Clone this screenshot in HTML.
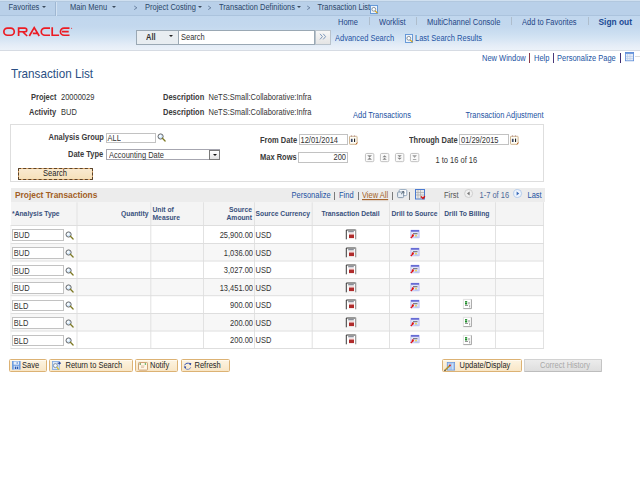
<!DOCTYPE html>
<html><head><meta charset="utf-8"><style>
*{box-sizing:border-box}
html,body{margin:0;padding:0;width:640px;height:480px;overflow:hidden;background:#fff;font-family:"Liberation Sans",sans-serif;font-size:7.5px;color:#333}
.a{position:absolute;white-space:nowrap;line-height:1}
svg.a{overflow:visible}
.lnk{color:#2353a3}
.lbl{font-weight:bold;color:#3a3a3a}
.navt{color:#2b4668}
.gh{font-weight:bold;color:#38507c;font-size:6.75px}
.t{transform:scaleY(1.1);transform-origin:0 85%}
</style></head><body>
<div class="a" style="left:0px;top:0px;width:640px;height:16px;background:#b9d0e9;border-top:1px solid #d0e0f0;border-bottom:1px solid #abc3dd"></div>
<div class="a" style="left:0px;top:1px;width:640px;height:1px;background:#b2c8df"></div>
<div class="a" style="left:0px;top:16px;width:640px;height:34px;background:linear-gradient(#c1d7ee 0%,#c3d8ee 30%,#cbdef1 50%,#d6e5f4 68%,#e3ecf7 84%,#ecf2f9 100%)"></div>
<div class="a" style="left:0px;top:50px;width:640px;height:1px;background:#d6dbe3"></div>
<div class="a t navt" style="left:8.5px;top:3.5px;">Favorites</div>
<div class="a" style="left:41.6px;top:5.9px;width:0;height:0;border-left:2.9px solid transparent;border-right:2.9px solid transparent;border-top:2.8px solid #3b4a5c"></div>
<div class="a" style="left:55px;top:2px;width:1px;height:13.5px;background:#9fb7d2"></div>
<div class="a" style="left:56px;top:2px;width:1px;height:13.5px;background:#d3e2f2"></div>
<div class="a t navt" style="left:70px;top:3.5px;">Main Menu</div>
<div class="a" style="left:111.6px;top:5.9px;width:0;height:0;border-left:2.9px solid transparent;border-right:2.9px solid transparent;border-top:2.8px solid #3b4a5c"></div>
<svg class="a" style="left:133.0px;top:0px" width="6" height="16" viewBox="0 0 6 16"><path d="M1.2 6L3.9 7.8L1.2 9.6" stroke="#5f7696" stroke-width="0.85" fill="none"/></svg>
<div class="a t navt" style="left:145px;top:3.5px;">Project Costing</div>
<div class="a" style="left:197.6px;top:5.9px;width:0;height:0;border-left:2.9px solid transparent;border-right:2.9px solid transparent;border-top:2.8px solid #3b4a5c"></div>
<svg class="a" style="left:206.5px;top:0px" width="6" height="16" viewBox="0 0 6 16"><path d="M1.2 6L3.9 7.8L1.2 9.6" stroke="#5f7696" stroke-width="0.85" fill="none"/></svg>
<div class="a t navt" style="left:219px;top:3.5px;">Transaction Definitions</div>
<div class="a" style="left:297.2px;top:5.9px;width:0;height:0;border-left:2.9px solid transparent;border-right:2.9px solid transparent;border-top:2.8px solid #3b4a5c"></div>
<svg class="a" style="left:305.5px;top:0px" width="6" height="16" viewBox="0 0 6 16"><path d="M1.2 6L3.9 7.8L1.2 9.6" stroke="#5f7696" stroke-width="0.85" fill="none"/></svg>
<div class="a t navt" style="left:317.5px;top:3.5px;">Transaction List</div>
<svg class="a" style="left:370px;top:5px" width="9" height="9" viewBox="0 0 9 9"><rect x="0.5" y="0.5" width="7" height="8" fill="#eef4fb" stroke="#5c92d6" stroke-width="0.9"/>
<circle cx="3.8" cy="4.3" r="1.9" fill="#fff" stroke="#6a7a8a" stroke-width="0.8"/>
<path d="M5.2 5.8L7.4 8.2" stroke="#d4a010" stroke-width="1.2"/></svg>
<svg class="a" style="left:0px;top:0px" width="80" height="50" viewBox="0 0 80 50"><g fill="none" stroke="#ec1c24" stroke-width="1.7">
<rect x="3.85" y="28.05" width="10.4" height="7.2" rx="3.6"/>
<path d="M18.6 36V28.05H24.9A1.85 1.85 0 0 1 24.9 31.75H19.2M22.6 31.75L27.2 36"/>
<path d="M29.3 36L34.2 27.6L39.2 36M32.8 33.3H37.3"/>
<path d="M50 28.05H44.85A3.6 3.6 0 0 0 44.85 35.25H50"/>
<path d="M52.2 27.3V35.25H59.1"/>
<path d="M69.5 28.05H64.05A3.6 3.6 0 0 0 64.05 35.25H69.5M62 31.7H68.7"/>
</g><circle cx="71.6" cy="28.25" r="0.55" fill="#ec1c24"/></svg>
<div class="a" style="left:136px;top:30.2px;width:42px;height:14.4px;background:#e8edf1;border:1px solid #9aa8b4;border-right:none"></div>
<div class="a t " style="left:146px;top:34px;font-weight:bold;color:#333">All</div>
<div class="a" style="left:169.2px;top:35.3px;width:0;height:0;border-left:2.4px solid transparent;border-right:2.4px solid transparent;border-top:2.6px solid #222"></div>
<div class="a" style="left:177.5px;top:30.2px;width:137px;height:14.4px;background:#fff;border:1px solid #9aa8b4"></div>
<div class="a t " style="left:181px;top:34px;">Search</div>
<div class="a" style="left:315px;top:29.5px;width:16px;height:15px;background:linear-gradient(#f7f7f7,#e4e4e4);border:1px solid #b9c3cc"></div>
<svg class="a" style="left:319px;top:33px" width="9" height="8" viewBox="0 0 9 8"><path d="M1 0.8L3.4 3.6L1 6.4M4.2 0.8L6.6 3.6L4.2 6.4" stroke="#6f8db5" stroke-width="0.9" fill="none"/></svg>
<div class="a t lnk" style="left:335px;top:35.1px;">Advanced Search</div>
<svg class="a" style="left:404.5px;top:33.8px" width="9" height="9" viewBox="0 0 9 9"><rect x="0.5" y="0.5" width="7" height="8" fill="#eef4fb" stroke="#5c92d6" stroke-width="0.9"/>
<circle cx="3.8" cy="4.3" r="1.9" fill="#fff" stroke="#6a7a8a" stroke-width="0.8"/>
<path d="M5.2 5.8L7.4 8.2" stroke="#d4a010" stroke-width="1.2"/></svg>
<div class="a t lnk" style="left:415px;top:35.1px;">Last Search Results</div>
<div class="a t lnk" style="left:338px;top:18.7px;color:#1f4585">Home</div>
<div class="a" style="left:369px;top:17.3px;width:1.2px;height:7.8px;background:#aebdcc"></div>
<div class="a t lnk" style="left:379px;top:18.7px;color:#1f4585">Worklist</div>
<div class="a" style="left:416px;top:17.3px;width:1.2px;height:7.8px;background:#aebdcc"></div>
<div class="a t lnk" style="left:427px;top:18.7px;color:#1f4585">MultiChannel Console</div>
<div class="a" style="left:511px;top:17.3px;width:1.2px;height:7.8px;background:#aebdcc"></div>
<div class="a t lnk" style="left:522px;top:18.7px;color:#1f4585">Add to Favorites</div>
<div class="a" style="left:588px;top:17.3px;width:1.2px;height:7.8px;background:#aebdcc"></div>
<div class="a t " style="left:598.5px;top:17.8px;font-size:8.4px;font-weight:bold;color:#1c4a94">Sign out</div>
<div class="a t lnk" style="left:482px;top:54.8px;">New Window</div>
<div class="a" style="left:529px;top:53.2px;width:1px;height:9.5px;background:#8a3a4a"></div>
<div class="a t lnk" style="left:534px;top:54.8px;">Help</div>
<div class="a" style="left:553px;top:53.2px;width:1px;height:9.5px;background:#4a3a7a"></div>
<div class="a t lnk" style="left:557px;top:54.8px;">Personalize Page</div>
<div class="a" style="left:620px;top:53px;width:1px;height:9.8px;background:#3e2e72"></div>
<svg class="a" style="left:625px;top:52.2px" width="10" height="10" viewBox="0 0 10 10"><rect x="0.4" y="0.4" width="8.2" height="8.4" fill="#e4ecf8" stroke="#5b8ad8" stroke-width="0.8"/>
<rect x="0.4" y="0.4" width="8.2" height="1.4" fill="#5b8ad8"/><path d="M2.5 2v6.4M5 2v6.4M1 4.5h7M1 6.5h7" stroke="#b8cbe8" stroke-width="0.6"/></svg>
<div class="a" style="left:635px;top:56px;width:5px;height:0.8px;background:#dcdcdc"></div>
<div class="a t " style="left:11px;top:68px;font-size:11.7px;color:#2a4f84">Transaction List</div>
<div class="a t lbl" style="left:31px;top:93.8px;">Project</div>
<div class="a t " style="left:61px;top:93.8px;">20000029</div>
<div class="a t lbl" style="left:29px;top:108.8px;">Activity</div>
<div class="a t " style="left:61px;top:108.8px;">BUD</div>
<div class="a t lbl" style="left:163px;top:93.8px;">Description</div>
<div class="a t " style="left:208.5px;top:93.8px;">NeTS:Small:Collaborative:Infra</div>
<div class="a t lbl" style="left:163px;top:108.8px;">Description</div>
<div class="a t " style="left:208.5px;top:108.8px;">NeTS:Small:Collaborative:Infra</div>
<div class="a t lnk" style="left:353px;top:112.2px;">Add Transactions</div>
<div class="a t lnk" style="left:465.5px;top:112.2px;">Transaction Adjustment</div>
<div class="a" style="left:10px;top:123.7px;width:534px;height:58.3px;border:1px solid #dedede"></div>
<div class="a t lbl" style="left:48.5px;top:134.2px;">Analysis Group</div>
<div class="a" style="left:105.5px;top:132.5px;width:50px;height:10.2px;background:#fff;border:1px solid #c2c2c2;padding:0 1.0px;line-height:9.6px;text-align:left;color:#333"><span class="t" style="display:inline-block">ALL</span></div>
<svg class="a" style="left:157px;top:133px" width="10" height="10" viewBox="0 0 10 10"><circle cx="3.6" cy="3.5" r="2.6" fill="#d4e8fa" stroke="#6a6a6a" stroke-width="1"/>
<circle cx="3.1" cy="3" r="1.1" fill="#fff"/>
<path d="M5.4 5.3L8.1 8" stroke="#7e7a24" stroke-width="1.3" stroke-linecap="round"/></svg>
<div class="a t lbl" style="left:68px;top:150.8px;">Date Type</div>
<div class="a" style="left:106px;top:149.3px;width:114px;height:11.2px;background:#fff;border:1px solid #a6a6b0;border-right:none;padding:0 2px;line-height:11.6px;color:#333"><span class="t" style="display:inline-block">Accounting Date</span></div>
<div class="a" style="left:209px;top:149.8px;width:11px;height:10px;background:linear-gradient(#ffffff,#e2e2e2);border:1px solid #7a7a7a"></div>
<div class="a" style="left:212.7px;top:153.5px;width:0;height:0;border-left:2.2px solid transparent;border-right:2.2px solid transparent;border-top:2.6px solid #111"></div>
<div class="a" style="left:17.5px;top:167.5px;width:75px;height:12.3px;background:linear-gradient(#f9ead0,#f5e1bb);border:1px solid #d9a46a;border-radius:1px"></div>
<div class="a" style="left:17.5px;top:167.5px;width:75px;height:12.3px;border:1px dashed rgba(40,25,10,0.7)"></div>
<div class="a t " style="left:17.5px;top:170px;width:75px;text-align:center;color:#222">Search</div>
<div class="a t lbl" style="left:260px;top:136.7px;">From Date</div>
<div class="a" style="left:298.5px;top:134.3px;width:49.5px;height:11.2px;background:#fff;border:1px solid #c2c2c2;padding:0 1.0px;line-height:11px;text-align:left;color:#333"><span class="t" style="display:inline-block">12/01/2014</span></div>
<svg class="a" style="left:348.8px;top:135.2px" width="9" height="10" viewBox="0 0 9 10"><rect x="0.5" y="1.3" width="7.6" height="8" rx="0.6" fill="#fffdf4" stroke="#c9ad86" stroke-width="0.9"/>
<rect x="1.9" y="3.8" width="1.7" height="3.2" fill="#3c4a6a"/><rect x="5" y="3.6" width="1.1" height="3.4" fill="#222"/>
<path d="M6.8 9.3L8.3 7.6" stroke="#c66a2a" stroke-width="1"/>
<rect x="2" y="0.3" width="0.9" height="1.6" fill="#b99"/><rect x="5" y="0.3" width="0.9" height="1.6" fill="#b99"/></svg>
<div class="a t lbl" style="left:260px;top:153.5px;">Max Rows</div>
<div class="a" style="left:298px;top:152px;width:50px;height:10.5px;background:#fff;border:1px solid #c2c2c2;padding:0 1.0px;line-height:10.6px;text-align:right;color:#333"><span class="t" style="display:inline-block">200</span></div>
<svg class="a" style="left:365.3px;top:152.9px" width="9" height="9" viewBox="0 0 9 9"><rect x="0.45" y="0.45" width="8.4" height="8.2" rx="1.2" fill="#fafafa" stroke="#b4b4b4" stroke-width="0.8"/><path d="M2.6 2.5h4M2.6 6.5h4" stroke="#858585" stroke-width="0.7"/><path d="M3 3.1h3.2L4.6 4.4zM3 5.9h3.2L4.6 4.6z" fill="#858585"/></svg>
<svg class="a" style="left:380.3px;top:152.9px" width="9" height="9" viewBox="0 0 9 9"><rect x="0.45" y="0.45" width="8.4" height="8.2" rx="1.2" fill="#fafafa" stroke="#b4b4b4" stroke-width="0.8"/><path d="M2.4 4.2h4.4L4.6 2.2zM2.4 6.8h4.4L4.6 4.7z" fill="#858585"/></svg>
<svg class="a" style="left:395.3px;top:152.9px" width="9" height="9" viewBox="0 0 9 9"><rect x="0.45" y="0.45" width="8.4" height="8.2" rx="1.2" fill="#fafafa" stroke="#b4b4b4" stroke-width="0.8"/><path d="M2.4 2.2h4.4L4.6 4.3zM2.4 4.7h4.4L4.6 6.8z" fill="#858585"/></svg>
<svg class="a" style="left:410.3px;top:152.9px" width="9" height="9" viewBox="0 0 9 9"><rect x="0.45" y="0.45" width="8.4" height="8.2" rx="1.2" fill="#fafafa" stroke="#b4b4b4" stroke-width="0.8"/><path d="M2.6 2.6h4M2.9 6.5h3.4" stroke="#858585" stroke-width="0.7"/><path d="M3 3.2h3.2L4.6 4.7z" fill="#858585"/></svg>
<div class="a t lbl" style="left:409px;top:136.7px;">Through Date</div>
<div class="a" style="left:459px;top:134.3px;width:50px;height:11.2px;background:#fff;border:1px solid #c2c2c2;padding:0 1.0px;line-height:11px;text-align:left;color:#333"><span class="t" style="display:inline-block">01/29/2015</span></div>
<svg class="a" style="left:510px;top:135.2px" width="9" height="10" viewBox="0 0 9 10"><rect x="0.5" y="1.3" width="7.6" height="8" rx="0.6" fill="#fffdf4" stroke="#c9ad86" stroke-width="0.9"/>
<rect x="1.9" y="3.8" width="1.7" height="3.2" fill="#3c4a6a"/><rect x="5" y="3.6" width="1.1" height="3.4" fill="#222"/>
<path d="M6.8 9.3L8.3 7.6" stroke="#c66a2a" stroke-width="1"/>
<rect x="2" y="0.3" width="0.9" height="1.6" fill="#b99"/><rect x="5" y="0.3" width="0.9" height="1.6" fill="#b99"/></svg>
<div class="a t " style="left:435.5px;top:156.7px;">1 to 16 of 16</div>
<div class="a" style="left:10.5px;top:187.6px;width:534.5px;height:14.8px;background:#ececec"></div>
<div class="a t " style="left:15px;top:190.8px;font-size:8.4px;font-weight:bold;color:#a25e25">Project Transactions</div>
<div class="a t lnk" style="left:291.5px;top:192px;">Personalize</div>
<div class="a" style="left:334px;top:192.3px;width:0.8px;height:7.3px;background:#7a7a7a"></div>
<div class="a t lnk" style="left:339px;top:192px;">Find</div>
<div class="a" style="left:357.7px;top:192.3px;width:0.8px;height:7.3px;background:#7a7a7a"></div>
<div class="a t " style="left:362px;top:192px;color:#a25e25"><u>View All</u></div>
<div class="a" style="left:392.3px;top:192.3px;width:0.8px;height:7.3px;background:#7a7a7a"></div>
<svg class="a" style="left:396.5px;top:188.5px" width="11" height="10" viewBox="0 0 11 10"><rect x="2.2" y="0.6" width="7.6" height="6" rx="1" fill="#fff" stroke="#8aa0b8" stroke-width="0.9"/>
<rect x="0.6" y="3" width="6" height="5.6" rx="1" fill="#e8eef4" stroke="#7c8ea4" stroke-width="0.9"/>
<path d="M4 5.2L6.8 2.6M5.2 2.6h1.8v1.8" stroke="#4a5a6a" stroke-width="0.8" fill="none"/></svg>
<div class="a" style="left:409.2px;top:192.3px;width:0.8px;height:7.3px;background:#7a7a7a"></div>
<svg class="a" style="left:415px;top:188.6px" width="10" height="10.5" viewBox="0 0 10 10.5"><rect x="0.5" y="0.5" width="9" height="9.5" fill="#e8e8e8" stroke="#4a7ad0" stroke-width="1"/>
<path d="M3 1v9M5.5 1v9M1 3.5h8M1 6h8" stroke="#aaa" stroke-width="0.7"/>
<path d="M6 7.5L8 9.5L9.8 7.2" stroke="#d01010" stroke-width="1.4" fill="none"/></svg>
<div class="a t " style="left:444px;top:192px;color:#555">First</div>
<svg class="a" style="left:464.3px;top:188.5px" width="10" height="10" viewBox="0 0 10 10"><circle cx="4.6" cy="4.5" r="4" fill="#f0f0f0" stroke="#c8c8c8" stroke-width="0.8"/><path d="M5.6 2.6v3.8L3 4.5z" fill="#777"/></svg>
<div class="a t " style="left:479.5px;top:192px;color:#4c6a99">1-7 of 16</div>
<svg class="a" style="left:513px;top:188.5px" width="10" height="10" viewBox="0 0 10 10"><circle cx="4.6" cy="4.5" r="4" fill="#eef4fc" stroke="#a8c4e8" stroke-width="0.8"/><path d="M3.6 2.6v3.8L6.2 4.5z" fill="#3a6ab8"/></svg>
<div class="a t lnk" style="left:527.5px;top:192px;">Last</div>
<div class="a" style="left:10.5px;top:202.3px;width:533.5px;height:23.2px;background:#f4f4f4"></div>
<svg class="a" style="left:0;top:0" width="640" height="480" viewBox="0 0 640 480"><rect x="10.5" y="244.0" width="533.5" height="16.5" fill="#f7f7f7"/><rect x="10.5" y="279.0" width="533.5" height="16.19999999999999" fill="#f7f7f7"/><rect x="10.5" y="314.0" width="533.5" height="16.5" fill="#f7f7f7"/><rect x="76.5" y="202.3" width="1" height="146.2" fill="#e2e2e2"/><rect x="150.3" y="202.3" width="1" height="146.2" fill="#e2e2e2"/><rect x="203.0" y="202.3" width="1" height="146.2" fill="#e2e2e2"/><rect x="254.0" y="202.3" width="1" height="146.2" fill="#e2e2e2"/><rect x="311.7" y="202.3" width="1" height="146.2" fill="#e2e2e2"/><rect x="389.0" y="202.3" width="1" height="146.2" fill="#e2e2e2"/><rect x="439.0" y="202.3" width="1" height="146.2" fill="#e2e2e2"/><rect x="495.0" y="202.3" width="1" height="146.2" fill="#e2e2e2"/><rect x="543.0" y="202.3" width="1" height="146.2" fill="#e2e2e2"/><rect x="10.5" y="225.0" width="533.5" height="1" fill="#dedede"/><rect x="10.5" y="243.0" width="533.5" height="1" fill="#dedede"/><rect x="10.5" y="260.5" width="533.5" height="1" fill="#dedede"/><rect x="10.5" y="278.0" width="533.5" height="1" fill="#dedede"/><rect x="10.5" y="295.2" width="533.5" height="1" fill="#dedede"/><rect x="10.5" y="313.0" width="533.5" height="1" fill="#dedede"/><rect x="10.5" y="330.5" width="533.5" height="1" fill="#dedede"/><rect x="10.5" y="348.0" width="533.5" height="1" fill="#dedede"/><rect x="10.6" y="225.5" width="0.7" height="122.5" fill="#ececec"/></svg>
<div class="a t gh" style="left:12px;top:210.8px;">*Analysis Type</div>
<div class="a t gh" style="left:120px;top:210.8px;width:28.5px;text-align:right;">Quantity</div>
<div class="a t gh" style="left:152.5px;top:206.5px;line-height:7.1px">Unit of<br>Measure</div>
<div class="a t gh" style="left:212px;top:206.5px;line-height:7.1px;width:40px;text-align:right">Source<br>Amount</div>
<div class="a t gh" style="left:255.5px;top:210.8px;">Source Currency</div>
<div class="a t gh" style="left:312px;top:210.8px;width:77px;text-align:center">Transaction Detail</div>
<div class="a t gh" style="left:389.5px;top:210.8px;width:50px;text-align:center">Drill to Source</div>
<div class="a t gh" style="left:444.2px;top:210.8px;">Drill To Billing</div>
<div class="a" style="left:12.2px;top:229.3px;width:52.2px;height:11.4px;background:#fff;border:1px solid #c2c2c2;padding:0 0.6px;line-height:11px;text-align:left;color:#333"><span class="t" style="display:inline-block">BUD</span></div>
<svg class="a" style="left:65px;top:231.0px" width="10" height="10" viewBox="0 0 10 10"><circle cx="3.6" cy="3.5" r="2.6" fill="#d4e8fa" stroke="#6a6a6a" stroke-width="1"/>
<circle cx="3.1" cy="3" r="1.1" fill="#fff"/>
<path d="M5.4 5.3L8.1 8" stroke="#7e7a24" stroke-width="1.3" stroke-linecap="round"/></svg>
<div class="a t " style="left:173px;top:231.7px;width:80px;text-align:right">25,900.00</div>
<div class="a t " style="left:255.5px;top:231.7px;">USD</div>
<svg class="a" style="left:342px;top:225.5px" width="20" height="16" viewBox="0 0 20 16"><path d="M4.3 13.3V4H13.6" stroke="#222" stroke-width="0.9" fill="none"/>
<rect x="13" y="3.6" width="1.3" height="9.7" fill="#9c9c9c"/>
<rect x="6.2" y="5.4" width="5.6" height="0.8" fill="#444a5a"/>
<rect x="7" y="7.6" width="5" height="1.2" fill="#e6b4b4"/><rect x="7" y="8.7" width="5" height="3.4" fill="#b02c2c"/></svg>
<svg class="a" style="left:406px;top:225.5px" width="20" height="16" viewBox="0 0 20 16"><rect x="4.3" y="3.7" width="9.4" height="8.6" rx="0.8" fill="#c4c6f2"/>
<rect x="5" y="4.3" width="8" height="1.2" fill="#4046c8"/>
<rect x="5.4" y="6.1" width="7" height="5.2" fill="#e4e6fa"/>
<rect x="7" y="7.3" width="4.5" height="0.9" fill="#555"/>
<circle cx="10" cy="9.8" r="0.9" fill="#f0d020"/>
<rect x="8.6" y="10.5" width="3.6" height="1" fill="#a8c0f0"/>
<path d="M4.8 12L7.2 9.6" stroke="#e01010" stroke-width="1.2"/><circle cx="6.8" cy="9.4" r="1.1" fill="#e01010"/></svg>
<div class="a" style="left:12.2px;top:247.3px;width:52.2px;height:11.4px;background:#fff;border:1px solid #c2c2c2;padding:0 0.6px;line-height:11px;text-align:left;color:#333"><span class="t" style="display:inline-block">BUD</span></div>
<svg class="a" style="left:65px;top:249.0px" width="10" height="10" viewBox="0 0 10 10"><circle cx="3.6" cy="3.5" r="2.6" fill="#d4e8fa" stroke="#6a6a6a" stroke-width="1"/>
<circle cx="3.1" cy="3" r="1.1" fill="#fff"/>
<path d="M5.4 5.3L8.1 8" stroke="#7e7a24" stroke-width="1.3" stroke-linecap="round"/></svg>
<div class="a t " style="left:173px;top:249.7px;width:80px;text-align:right">1,036.00</div>
<div class="a t " style="left:255.5px;top:249.7px;">USD</div>
<svg class="a" style="left:342px;top:243.5px" width="20" height="16" viewBox="0 0 20 16"><path d="M4.3 13.3V4H13.6" stroke="#222" stroke-width="0.9" fill="none"/>
<rect x="13" y="3.6" width="1.3" height="9.7" fill="#9c9c9c"/>
<rect x="6.2" y="5.4" width="5.6" height="0.8" fill="#444a5a"/>
<rect x="7" y="7.6" width="5" height="1.2" fill="#e6b4b4"/><rect x="7" y="8.7" width="5" height="3.4" fill="#b02c2c"/></svg>
<svg class="a" style="left:406px;top:243.5px" width="20" height="16" viewBox="0 0 20 16"><rect x="4.3" y="3.7" width="9.4" height="8.6" rx="0.8" fill="#c4c6f2"/>
<rect x="5" y="4.3" width="8" height="1.2" fill="#4046c8"/>
<rect x="5.4" y="6.1" width="7" height="5.2" fill="#e4e6fa"/>
<rect x="7" y="7.3" width="4.5" height="0.9" fill="#555"/>
<circle cx="10" cy="9.8" r="0.9" fill="#f0d020"/>
<rect x="8.6" y="10.5" width="3.6" height="1" fill="#a8c0f0"/>
<path d="M4.8 12L7.2 9.6" stroke="#e01010" stroke-width="1.2"/><circle cx="6.8" cy="9.4" r="1.1" fill="#e01010"/></svg>
<div class="a" style="left:12.2px;top:264.8px;width:52.2px;height:11.4px;background:#fff;border:1px solid #c2c2c2;padding:0 0.6px;line-height:11px;text-align:left;color:#333"><span class="t" style="display:inline-block">BUD</span></div>
<svg class="a" style="left:65px;top:266.5px" width="10" height="10" viewBox="0 0 10 10"><circle cx="3.6" cy="3.5" r="2.6" fill="#d4e8fa" stroke="#6a6a6a" stroke-width="1"/>
<circle cx="3.1" cy="3" r="1.1" fill="#fff"/>
<path d="M5.4 5.3L8.1 8" stroke="#7e7a24" stroke-width="1.3" stroke-linecap="round"/></svg>
<div class="a t " style="left:173px;top:267.2px;width:80px;text-align:right">3,027.00</div>
<div class="a t " style="left:255.5px;top:267.2px;">USD</div>
<svg class="a" style="left:342px;top:261.0px" width="20" height="16" viewBox="0 0 20 16"><path d="M4.3 13.3V4H13.6" stroke="#222" stroke-width="0.9" fill="none"/>
<rect x="13" y="3.6" width="1.3" height="9.7" fill="#9c9c9c"/>
<rect x="6.2" y="5.4" width="5.6" height="0.8" fill="#444a5a"/>
<rect x="7" y="7.6" width="5" height="1.2" fill="#e6b4b4"/><rect x="7" y="8.7" width="5" height="3.4" fill="#b02c2c"/></svg>
<svg class="a" style="left:406px;top:261.0px" width="20" height="16" viewBox="0 0 20 16"><rect x="4.3" y="3.7" width="9.4" height="8.6" rx="0.8" fill="#c4c6f2"/>
<rect x="5" y="4.3" width="8" height="1.2" fill="#4046c8"/>
<rect x="5.4" y="6.1" width="7" height="5.2" fill="#e4e6fa"/>
<rect x="7" y="7.3" width="4.5" height="0.9" fill="#555"/>
<circle cx="10" cy="9.8" r="0.9" fill="#f0d020"/>
<rect x="8.6" y="10.5" width="3.6" height="1" fill="#a8c0f0"/>
<path d="M4.8 12L7.2 9.6" stroke="#e01010" stroke-width="1.2"/><circle cx="6.8" cy="9.4" r="1.1" fill="#e01010"/></svg>
<div class="a" style="left:12.2px;top:282.3px;width:52.2px;height:11.4px;background:#fff;border:1px solid #c2c2c2;padding:0 0.6px;line-height:11px;text-align:left;color:#333"><span class="t" style="display:inline-block">BUD</span></div>
<svg class="a" style="left:65px;top:284.0px" width="10" height="10" viewBox="0 0 10 10"><circle cx="3.6" cy="3.5" r="2.6" fill="#d4e8fa" stroke="#6a6a6a" stroke-width="1"/>
<circle cx="3.1" cy="3" r="1.1" fill="#fff"/>
<path d="M5.4 5.3L8.1 8" stroke="#7e7a24" stroke-width="1.3" stroke-linecap="round"/></svg>
<div class="a t " style="left:173px;top:284.7px;width:80px;text-align:right">13,451.00</div>
<div class="a t " style="left:255.5px;top:284.7px;">USD</div>
<svg class="a" style="left:342px;top:278.5px" width="20" height="16" viewBox="0 0 20 16"><path d="M4.3 13.3V4H13.6" stroke="#222" stroke-width="0.9" fill="none"/>
<rect x="13" y="3.6" width="1.3" height="9.7" fill="#9c9c9c"/>
<rect x="6.2" y="5.4" width="5.6" height="0.8" fill="#444a5a"/>
<rect x="7" y="7.6" width="5" height="1.2" fill="#e6b4b4"/><rect x="7" y="8.7" width="5" height="3.4" fill="#b02c2c"/></svg>
<svg class="a" style="left:406px;top:278.5px" width="20" height="16" viewBox="0 0 20 16"><rect x="4.3" y="3.7" width="9.4" height="8.6" rx="0.8" fill="#c4c6f2"/>
<rect x="5" y="4.3" width="8" height="1.2" fill="#4046c8"/>
<rect x="5.4" y="6.1" width="7" height="5.2" fill="#e4e6fa"/>
<rect x="7" y="7.3" width="4.5" height="0.9" fill="#555"/>
<circle cx="10" cy="9.8" r="0.9" fill="#f0d020"/>
<rect x="8.6" y="10.5" width="3.6" height="1" fill="#a8c0f0"/>
<path d="M4.8 12L7.2 9.6" stroke="#e01010" stroke-width="1.2"/><circle cx="6.8" cy="9.4" r="1.1" fill="#e01010"/></svg>
<div class="a" style="left:12.2px;top:299.5px;width:52.2px;height:11.4px;background:#fff;border:1px solid #c2c2c2;padding:0 0.6px;line-height:11px;text-align:left;color:#333"><span class="t" style="display:inline-block">BLD</span></div>
<svg class="a" style="left:65px;top:301.2px" width="10" height="10" viewBox="0 0 10 10"><circle cx="3.6" cy="3.5" r="2.6" fill="#d4e8fa" stroke="#6a6a6a" stroke-width="1"/>
<circle cx="3.1" cy="3" r="1.1" fill="#fff"/>
<path d="M5.4 5.3L8.1 8" stroke="#7e7a24" stroke-width="1.3" stroke-linecap="round"/></svg>
<div class="a t " style="left:173px;top:301.9px;width:80px;text-align:right">900.00</div>
<div class="a t " style="left:255.5px;top:301.9px;">USD</div>
<svg class="a" style="left:342px;top:295.7px" width="20" height="16" viewBox="0 0 20 16"><path d="M4.3 13.3V4H13.6" stroke="#222" stroke-width="0.9" fill="none"/>
<rect x="13" y="3.6" width="1.3" height="9.7" fill="#9c9c9c"/>
<rect x="6.2" y="5.4" width="5.6" height="0.8" fill="#444a5a"/>
<rect x="7" y="7.6" width="5" height="1.2" fill="#e6b4b4"/><rect x="7" y="8.7" width="5" height="3.4" fill="#b02c2c"/></svg>
<svg class="a" style="left:406px;top:295.7px" width="20" height="16" viewBox="0 0 20 16"><rect x="4.3" y="3.7" width="9.4" height="8.6" rx="0.8" fill="#c4c6f2"/>
<rect x="5" y="4.3" width="8" height="1.2" fill="#4046c8"/>
<rect x="5.4" y="6.1" width="7" height="5.2" fill="#e4e6fa"/>
<rect x="7" y="7.3" width="4.5" height="0.9" fill="#555"/>
<circle cx="10" cy="9.8" r="0.9" fill="#f0d020"/>
<rect x="8.6" y="10.5" width="3.6" height="1" fill="#a8c0f0"/>
<path d="M4.8 12L7.2 9.6" stroke="#e01010" stroke-width="1.2"/><circle cx="6.8" cy="9.4" r="1.1" fill="#e01010"/></svg>
<svg class="a" style="left:463px;top:299.2px" width="9" height="10" viewBox="0 0 9 10"><rect x="0.4" y="0.4" width="8.4" height="9.4" fill="#fff"/>
<path d="M0.4 9.6V0.4H8.4" stroke="#d4d4d4" stroke-width="0.7" fill="none"/><path d="M8.4 0.4V9.6H0.4" stroke="#8c8c8c" stroke-width="0.8" fill="none"/>
<rect x="2" y="2.1" width="2.2" height="1.5" fill="#1e8c2a"/><rect x="2" y="3.9" width="2.2" height="1.6" fill="#1e8c2a"/><rect x="5.2" y="3" width="1.6" height="2.4" fill="#b8b8b8"/>
<rect x="2" y="6.3" width="3" height="0.7" fill="#666"/><rect x="6.2" y="6.2" width="0.9" height="2.2" fill="#999"/></svg>
<div class="a" style="left:12.2px;top:317.3px;width:52.2px;height:11.4px;background:#fff;border:1px solid #c2c2c2;padding:0 0.6px;line-height:11px;text-align:left;color:#333"><span class="t" style="display:inline-block">BLD</span></div>
<svg class="a" style="left:65px;top:319.0px" width="10" height="10" viewBox="0 0 10 10"><circle cx="3.6" cy="3.5" r="2.6" fill="#d4e8fa" stroke="#6a6a6a" stroke-width="1"/>
<circle cx="3.1" cy="3" r="1.1" fill="#fff"/>
<path d="M5.4 5.3L8.1 8" stroke="#7e7a24" stroke-width="1.3" stroke-linecap="round"/></svg>
<div class="a t " style="left:173px;top:319.7px;width:80px;text-align:right">200.00</div>
<div class="a t " style="left:255.5px;top:319.7px;">USD</div>
<svg class="a" style="left:342px;top:313.5px" width="20" height="16" viewBox="0 0 20 16"><path d="M4.3 13.3V4H13.6" stroke="#222" stroke-width="0.9" fill="none"/>
<rect x="13" y="3.6" width="1.3" height="9.7" fill="#9c9c9c"/>
<rect x="6.2" y="5.4" width="5.6" height="0.8" fill="#444a5a"/>
<rect x="7" y="7.6" width="5" height="1.2" fill="#e6b4b4"/><rect x="7" y="8.7" width="5" height="3.4" fill="#b02c2c"/></svg>
<svg class="a" style="left:406px;top:313.5px" width="20" height="16" viewBox="0 0 20 16"><rect x="4.3" y="3.7" width="9.4" height="8.6" rx="0.8" fill="#c4c6f2"/>
<rect x="5" y="4.3" width="8" height="1.2" fill="#4046c8"/>
<rect x="5.4" y="6.1" width="7" height="5.2" fill="#e4e6fa"/>
<rect x="7" y="7.3" width="4.5" height="0.9" fill="#555"/>
<circle cx="10" cy="9.8" r="0.9" fill="#f0d020"/>
<rect x="8.6" y="10.5" width="3.6" height="1" fill="#a8c0f0"/>
<path d="M4.8 12L7.2 9.6" stroke="#e01010" stroke-width="1.2"/><circle cx="6.8" cy="9.4" r="1.1" fill="#e01010"/></svg>
<svg class="a" style="left:463px;top:317.0px" width="9" height="10" viewBox="0 0 9 10"><rect x="0.4" y="0.4" width="8.4" height="9.4" fill="#fff"/>
<path d="M0.4 9.6V0.4H8.4" stroke="#d4d4d4" stroke-width="0.7" fill="none"/><path d="M8.4 0.4V9.6H0.4" stroke="#8c8c8c" stroke-width="0.8" fill="none"/>
<rect x="2" y="2.1" width="2.2" height="1.5" fill="#1e8c2a"/><rect x="2" y="3.9" width="2.2" height="1.6" fill="#1e8c2a"/><rect x="5.2" y="3" width="1.6" height="2.4" fill="#b8b8b8"/>
<rect x="2" y="6.3" width="3" height="0.7" fill="#666"/><rect x="6.2" y="6.2" width="0.9" height="2.2" fill="#999"/></svg>
<div class="a" style="left:12.2px;top:334.8px;width:52.2px;height:11.4px;background:#fff;border:1px solid #c2c2c2;padding:0 0.6px;line-height:11px;text-align:left;color:#333"><span class="t" style="display:inline-block">BLD</span></div>
<svg class="a" style="left:65px;top:336.5px" width="10" height="10" viewBox="0 0 10 10"><circle cx="3.6" cy="3.5" r="2.6" fill="#d4e8fa" stroke="#6a6a6a" stroke-width="1"/>
<circle cx="3.1" cy="3" r="1.1" fill="#fff"/>
<path d="M5.4 5.3L8.1 8" stroke="#7e7a24" stroke-width="1.3" stroke-linecap="round"/></svg>
<div class="a t " style="left:173px;top:337.2px;width:80px;text-align:right">200.00</div>
<div class="a t " style="left:255.5px;top:337.2px;">USD</div>
<svg class="a" style="left:342px;top:331.0px" width="20" height="16" viewBox="0 0 20 16"><path d="M4.3 13.3V4H13.6" stroke="#222" stroke-width="0.9" fill="none"/>
<rect x="13" y="3.6" width="1.3" height="9.7" fill="#9c9c9c"/>
<rect x="6.2" y="5.4" width="5.6" height="0.8" fill="#444a5a"/>
<rect x="7" y="7.6" width="5" height="1.2" fill="#e6b4b4"/><rect x="7" y="8.7" width="5" height="3.4" fill="#b02c2c"/></svg>
<svg class="a" style="left:406px;top:331.0px" width="20" height="16" viewBox="0 0 20 16"><rect x="4.3" y="3.7" width="9.4" height="8.6" rx="0.8" fill="#c4c6f2"/>
<rect x="5" y="4.3" width="8" height="1.2" fill="#4046c8"/>
<rect x="5.4" y="6.1" width="7" height="5.2" fill="#e4e6fa"/>
<rect x="7" y="7.3" width="4.5" height="0.9" fill="#555"/>
<circle cx="10" cy="9.8" r="0.9" fill="#f0d020"/>
<rect x="8.6" y="10.5" width="3.6" height="1" fill="#a8c0f0"/>
<path d="M4.8 12L7.2 9.6" stroke="#e01010" stroke-width="1.2"/><circle cx="6.8" cy="9.4" r="1.1" fill="#e01010"/></svg>
<svg class="a" style="left:463px;top:334.5px" width="9" height="10" viewBox="0 0 9 10"><rect x="0.4" y="0.4" width="8.4" height="9.4" fill="#fff"/>
<path d="M0.4 9.6V0.4H8.4" stroke="#d4d4d4" stroke-width="0.7" fill="none"/><path d="M8.4 0.4V9.6H0.4" stroke="#8c8c8c" stroke-width="0.8" fill="none"/>
<rect x="2" y="2.1" width="2.2" height="1.5" fill="#1e8c2a"/><rect x="2" y="3.9" width="2.2" height="1.6" fill="#1e8c2a"/><rect x="5.2" y="3" width="1.6" height="2.4" fill="#b8b8b8"/>
<rect x="2" y="6.3" width="3" height="0.7" fill="#666"/><rect x="6.2" y="6.2" width="0.9" height="2.2" fill="#999"/></svg>
<div class="a" style="left:9.3px;top:359.2px;width:37.5px;height:12.6px;background:linear-gradient(#fdf4e2,#f8e6c6);border:1px solid #dcb274;border-radius:1.5px;box-shadow:inset 0 1px 0 #fffaf0"></div>
<div class="a t " style="left:22px;top:362px;color:#1e1e1e">Save</div>
<svg class="a" style="left:11.8px;top:361.3px" width="9" height="9" viewBox="0 0 9 9"><rect x="0" y="0" width="8.6" height="8.6" fill="#6f9fe0"/><rect x="1.6" y="0.5" width="5.4" height="3.2" fill="#e6eefa"/><rect x="4.6" y="1" width="1.2" height="2" fill="#7aa0d8"/><rect x="1.8" y="4.8" width="5" height="3.8" fill="#dbe7f8"/><rect x="2.8" y="5.6" width="1.4" height="2.4" fill="#2a5ab0"/><rect x="4.8" y="5.6" width="1.4" height="2.4" fill="#2a5ab0"/></svg>
<div class="a" style="left:49.4px;top:359.2px;width:83.5px;height:12.6px;background:linear-gradient(#fdf4e2,#f8e6c6);border:1px solid #dcb274;border-radius:1.5px;box-shadow:inset 0 1px 0 #fffaf0"></div>
<div class="a t " style="left:65.5px;top:362px;color:#1e1e1e">Return to Search</div>
<svg class="a" style="left:51.8px;top:361px" width="10" height="10" viewBox="0 0 10 10"><rect x="0.4" y="0.4" width="6.8" height="8" fill="#dce8f8" stroke="#7aa6e0" stroke-width="0.8"/><circle cx="3.4" cy="4.6" r="2" fill="#f4f8ff" stroke="#607080" stroke-width="0.7"/><path d="M4.8 6.2L6.8 8.6" stroke="#d8c020" stroke-width="1.2"/><path d="M5.5 2.2h2.6M7.2 1.2L8.6 2.2L7.2 3.2" stroke="#1a3aa0" stroke-width="1" fill="none"/></svg>
<div class="a" style="left:135.3px;top:359.2px;width:42.3px;height:12.6px;background:linear-gradient(#fdf4e2,#f8e6c6);border:1px solid #dcb274;border-radius:1.5px;box-shadow:inset 0 1px 0 #fffaf0"></div>
<div class="a t " style="left:150px;top:362px;color:#1e1e1e">Notify</div>
<svg class="a" style="left:138px;top:361.8px" width="10" height="9" viewBox="0 0 10 9"><rect x="0.5" y="0.5" width="9" height="7.6" rx="0.8" fill="#fff6e6" stroke="#c89a6a" stroke-width="0.9"/><circle cx="2.2" cy="2" r="0.8" fill="#3a7a2a"/><circle cx="7.4" cy="2" r="0.8" fill="#2aa03a"/><path d="M3 4h3.5M3 5.3h3" stroke="#c4a080" stroke-width="0.6"/></svg>
<div class="a" style="left:180.6px;top:359.2px;width:49.2px;height:12.6px;background:linear-gradient(#fdf4e2,#f8e6c6);border:1px solid #dcb274;border-radius:1.5px;box-shadow:inset 0 1px 0 #fffaf0"></div>
<div class="a t " style="left:194.5px;top:362px;color:#1e1e1e">Refresh</div>
<svg class="a" style="left:182.5px;top:361.5px" width="10" height="9" viewBox="0 0 10 9"><path d="M1.6 3.3A3.2 3.2 0 0 1 7 2.2" stroke="#2a4ab0" stroke-width="0.9" fill="none"/><path d="M6.2 0.8L8.4 1.4L7.2 3.6z" fill="#0a2a9a"/><path d="M7.8 5.2A3.2 3.2 0 0 1 2.4 6.4" stroke="#6a82c8" stroke-width="0.9" fill="none"/><path d="M0.8 4.6L3.2 4.4L2.2 6.8z" fill="#0a2a9a"/></svg>
<div class="a" style="left:441.5px;top:359.2px;width:80px;height:12.6px;background:linear-gradient(#fdf4e2,#f8e6c6);border:1px solid #dcb274;border-radius:1.5px;box-shadow:inset 0 1px 0 #fffaf0"></div>
<div class="a t " style="left:459.5px;top:362px;color:#1e1e1e">Update/Display</div>
<svg class="a" style="left:443.5px;top:361.5px" width="12" height="10" viewBox="0 0 12 10"><rect x="3.2" y="0.3" width="7.5" height="7.8" fill="#a8c8f0" stroke="#5a8ad8" stroke-width="0.6"/><path d="M4.8 1.5v6M8.6 1.5v6" stroke="#e6f0fc" stroke-width="0.6"/><path d="M0.8 8.5L6 3.4" stroke="#b09030" stroke-width="1.5"/><circle cx="6" cy="3.3" r="0.9" fill="#e01818"/><circle cx="0.9" cy="8.4" r="0.6" fill="#333"/></svg>
<div class="a" style="left:524.4px;top:359.2px;width:77.5px;height:12.6px;background:linear-gradient(#ececec,#dedede);border:1px solid #d2d2d2;border-bottom-color:#bdbdbd;border-right-color:#c4c4c4;border-radius:1px"></div>
<div class="a t " style="left:540px;top:362px;color:#a8a8a8">Correct History</div>
</body></html>
